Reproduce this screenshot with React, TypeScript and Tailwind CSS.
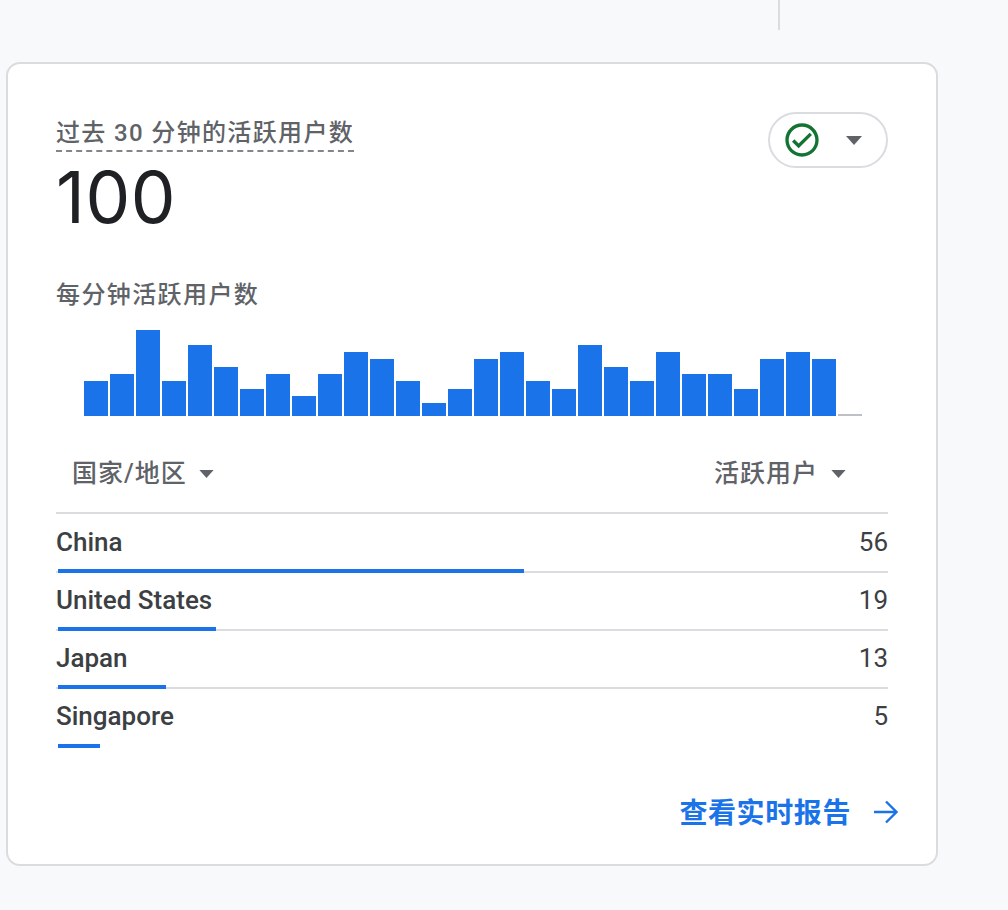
const bars = [35,42,86,35,71,49,27,42,20,42,64,57,35,13,27,57,64,35,27,71,49,35,64,42,42,27,57,64,57];
const rows = [
  { name: "China", value: 56, width: 466 },
  { name: "United States", value: 19, width: 158 },
  { name: "Japan", value: 13, width: 108 },
  { name: "Singapore", value: 5, width: 42 },
];

function Caret({ className }: { className: string }) {
  return (
    <svg className={className} viewBox="0 0 16 9" aria-hidden="true">
      <path d="M0 0h16L8 9z" fill="#5f6368" />
    </svg>
  );
}

export default function App() {
  return (
    <div className="min-h-[910px] w-[1008px] overflow-hidden bg-[#f8f9fa] font-['Roboto','Noto_Sans_CJK_SC',sans-serif]">
      <div className="ml-[778px] h-[30px] w-[2px] bg-[#dadce0]" />
      <div className="ml-[6px] mt-[32px] h-[804px] w-[932px] rounded-[14px] border-2 border-[#dadce0] bg-white px-[48px] pt-[48px]">
        <div className="flex items-start justify-between">
          <div>
            <div className="w-[298px] whitespace-nowrap border-b-2 border-dashed border-[#80868b] pt-[4px] text-[24px] font-medium leading-[34px] tracking-[1.35px] text-[#5f6368]">
              过去 30 分钟的活跃用户数
            </div>
            <div className="mt-[9px] font-['Inter',sans-serif] text-[71px] font-normal leading-[72px] tracking-[0.5px] text-[#202124]">100</div>
          </div>
          <div className="flex h-[56px] w-[120px] items-center rounded-full border-2 border-[#dadce0] pl-[12px]">
            <svg className="h-[40px] w-[40px]" viewBox="0 0 24 24" aria-hidden="true">
              <path
                fill="#137333"
                d="M12 2C6.48 2 2 6.48 2 12s4.48 10 10 10 10-4.48 10-10S17.52 2 12 2zm0 18c-4.41 0-8-3.59-8-8s3.59-8 8-8 8 3.59 8 8-3.59 8-8 8zm4.59-12.42L10 14.17l-2.59-2.58L6 13l4 4 8-8z"
              />
            </svg>
            <Caret className="ml-[24px] h-[9px] w-[16px]" />
          </div>
        </div>

        <div className="mb-[19px] mt-[46px] text-[24px] font-medium leading-[32px] tracking-[1.4px] text-[#5f6368]">每分钟活跃用户数</div>

        <div className="flex h-[86px] items-end gap-[2px] pl-[28px]">
          {bars.map((h, i) => (
            <div key={i} className="w-[24px] bg-[#1a73e8]" style={{ height: h }} />
          ))}
          <div className="h-[2px] w-[24px] bg-[#bdc1c6]" />
        </div>

        <div className="mb-[1px] flex h-[98px] items-center justify-between border-b-2 border-[#dadce0] pl-[16px] pr-[42px] pt-[20px] text-[25px] font-medium leading-[32px] tracking-[1px] text-[#5f6368]">
          <div className="flex items-center">
            国家/地区
            <Caret className="ml-[12px] h-[8px] w-[15px]" />
          </div>
          <div className="flex items-center">
            活跃用户
            <Caret className="ml-[13px] h-[8px] w-[15px]" />
          </div>
        </div>

        {rows.map((r, i) => (
          <div key={r.name}>
            <div className="flex h-[56px] items-center justify-between pb-[2px] text-[26px] leading-[32px] text-[#3c4043]">
              <span className="font-medium">{r.name}</span>
              <span>{r.value}</span>
            </div>
            <div className={i < 3 ? "relative h-[2px] bg-[#dadce0]" : "relative mt-[1px] h-[2px]"}>
              <div className="absolute bottom-0 left-[2px] h-[4px] bg-[#1a73e8]" style={{ width: r.width }} />
            </div>
          </div>
        ))}

        <div className="mt-[44px] flex h-[40px] items-center justify-end text-[28px] font-bold leading-[36px] tracking-[0.6px] text-[#1a73e8]">
          <span className="pt-[4px]">查看实时报告</span>
          <svg className="-mr-[10px] ml-[23px] h-[24px] w-[24px]" viewBox="0 0 24 24" fill="none" stroke="#1a73e8" strokeWidth="2.4" aria-hidden="true">
            <path d="M0 12h22M12 1.5 22.5 12 12 22.5" />
          </svg>
        </div>
      </div>
    </div>
  );
}
